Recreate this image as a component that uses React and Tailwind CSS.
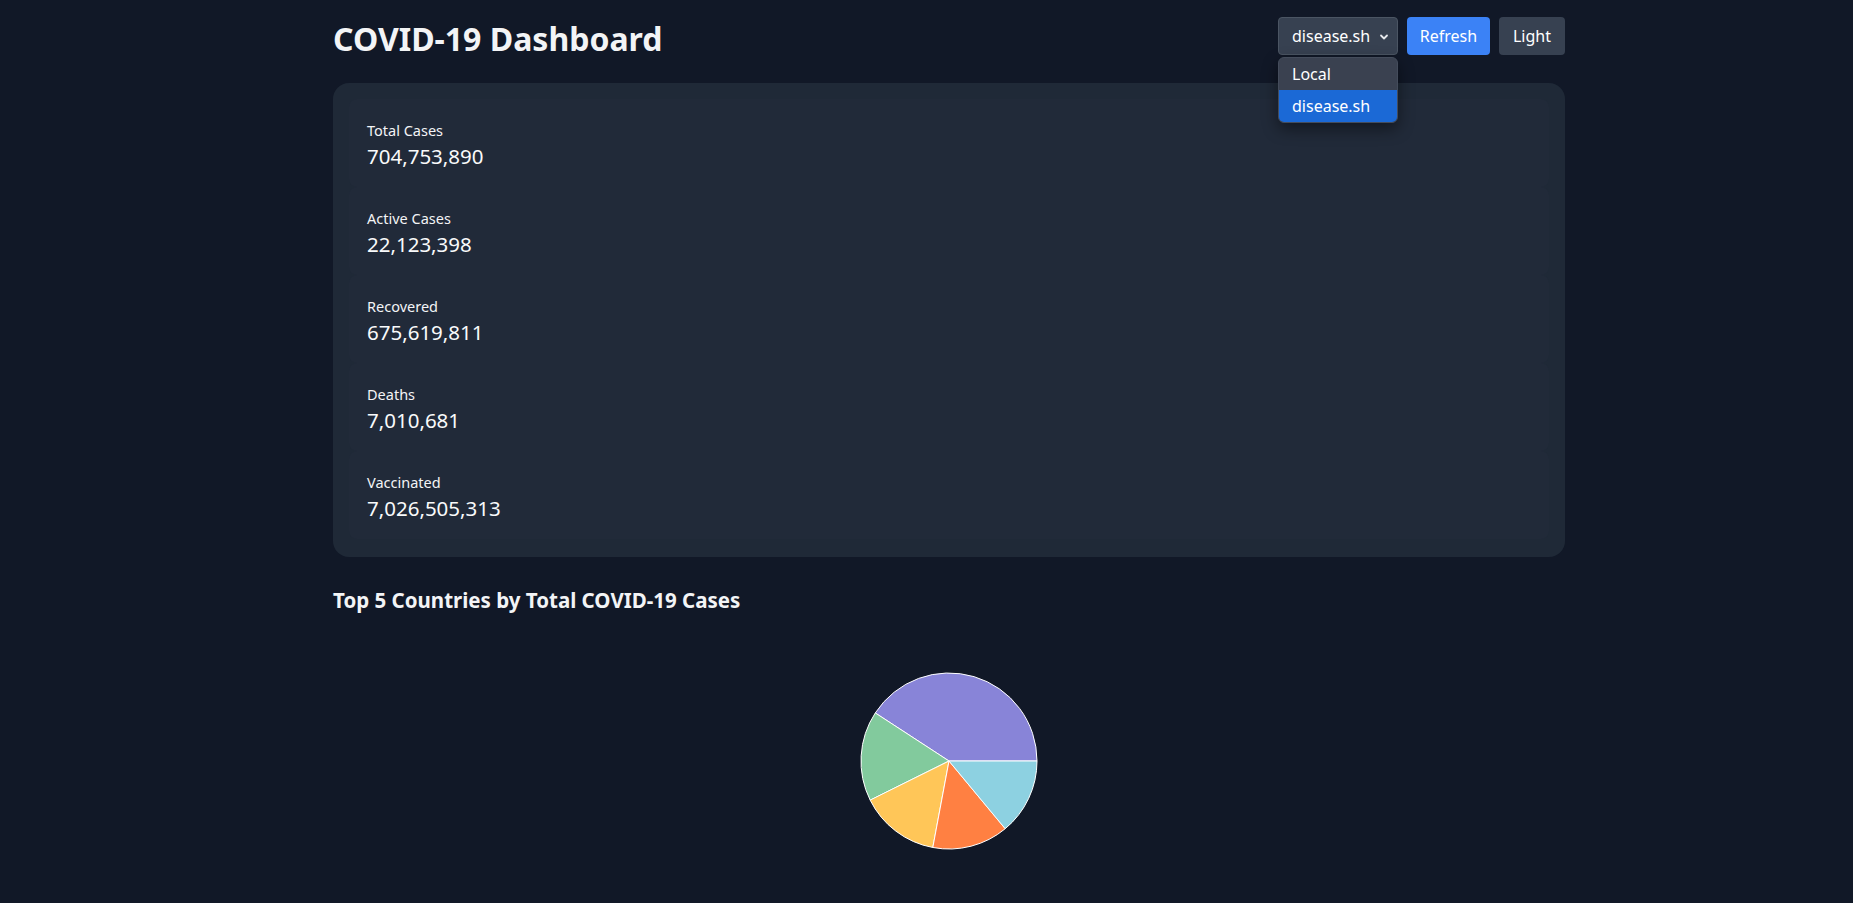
import React from "react";

const stats = [
  { label: "Total Cases", value: "704,753,890" },
  { label: "Active Cases", value: "22,123,398" },
  { label: "Recovered", value: "675,619,811" },
  { label: "Deaths", value: "7,010,681" },
  { label: "Vaccinated", value: "7,026,505,313" },
];

const slices = [
  { from: 0, to: 146.9, color: "#8884d8" },
  { from: 146.9, to: 206.4, color: "#82ca9d" },
  { from: 206.4, to: 259.4, color: "#ffc658" },
  { from: 259.4, to: 309.7, color: "#ff8042" },
  { from: 309.7, to: 360, color: "#8dd1e1" },
];

function Pie() {
  const cx = 90, cy = 90, r = 88;
  const pt = (a) => {
    const rad = (a * Math.PI) / 180;
    return [cx + r * Math.cos(rad), cy - r * Math.sin(rad)];
  };
  return (
    <svg width="180" height="180" viewBox="0 0 180 180">
      {slices.map((s, i) => {
        const [x1, y1] = pt(s.from);
        const [x2, y2] = pt(s.to);
        const large = s.to - s.from > 180 ? 1 : 0;
        const d = `M${cx},${cy} L${x1},${y1} A${r},${r} 0 ${large} 0 ${x2},${y2} Z`;
        return <path key={i} d={d} fill={s.color} stroke="#fff" strokeWidth="1" />;
      })}
    </svg>
  );
}

export default function App() {
  return (
    <div
      className="min-h-screen bg-[#111827] text-gray-100"
      style={{ fontFamily: '"Noto Sans", "Open Sans", sans-serif' }}
    >
      <div className="flex justify-center pl-[45px]">
        <div className="w-[1232px]">
          <header className="flex items-center justify-between pt-[17px] h-[55px]">
            <h1 className="text-[32px] font-bold leading-[38px] pt-[5px] text-gray-100">COVID-19 Dashboard</h1>
            <div className="flex items-center gap-[9px]">
              <div className="relative">
                <div className="flex items-center justify-between w-[120px] h-[38px] pl-[13px] pr-[8px] rounded bg-[#374151] border border-[#4b5563] text-[16px] text-white">
                  <span>disease.sh</span>
                  <svg width="10" height="10" viewBox="0 0 10 10" className="mt-[1px]">
                    <path d="M2 3.5 L5 6.5 L8 3.5" fill="none" stroke="#e5e7eb" strokeWidth="1.8" strokeLinecap="round" strokeLinejoin="round" />
                  </svg>
                </div>
                <div className="absolute left-0 top-[40px] w-[120px] rounded-md bg-[#3a4150] border border-[#444c5b] shadow-[0_6px_16px_rgba(0,0,0,0.45)] overflow-hidden text-[16px] text-white z-10">
                  <div className="h-[32px] flex items-center pl-[13px]">Local</div>
                  <div className="h-[32px] flex items-center pl-[13px] bg-[#1b69d6]">disease.sh</div>
                </div>
              </div>
              <button className="h-[38px] w-[83px] rounded bg-[#3b82f6] text-white text-[16px]">Refresh</button>
              <button className="h-[38px] w-[66px] rounded bg-[#374151] text-white text-[16px]">Light</button>
            </div>
          </header>

          <section className="mt-[28px] rounded-2xl bg-[#1f2937] pt-4 px-4 pb-[18px]">
            {stats.map((s) => (
              <div key={s.label} className="rounded-lg bg-[#212a39] px-[18px] pt-[21px] h-[88px]">
                <div className="text-[14.5px] leading-[20px] text-gray-100">{s.label}</div>
                <div className="text-[20.5px] leading-[28px] mt-[2px] text-gray-50">{s.value}</div>
              </div>
            ))}
          </section>

          <h2 className="mt-[29px] text-[20.5px] leading-[28px] font-bold text-gray-100">
            Top 5 Countries by Total COVID-19 Cases
          </h2>

          <div className="flex justify-center mt-[57px] pb-[60px]">
            <Pie />
          </div>
        </div>
      </div>
    </div>
  );
}
